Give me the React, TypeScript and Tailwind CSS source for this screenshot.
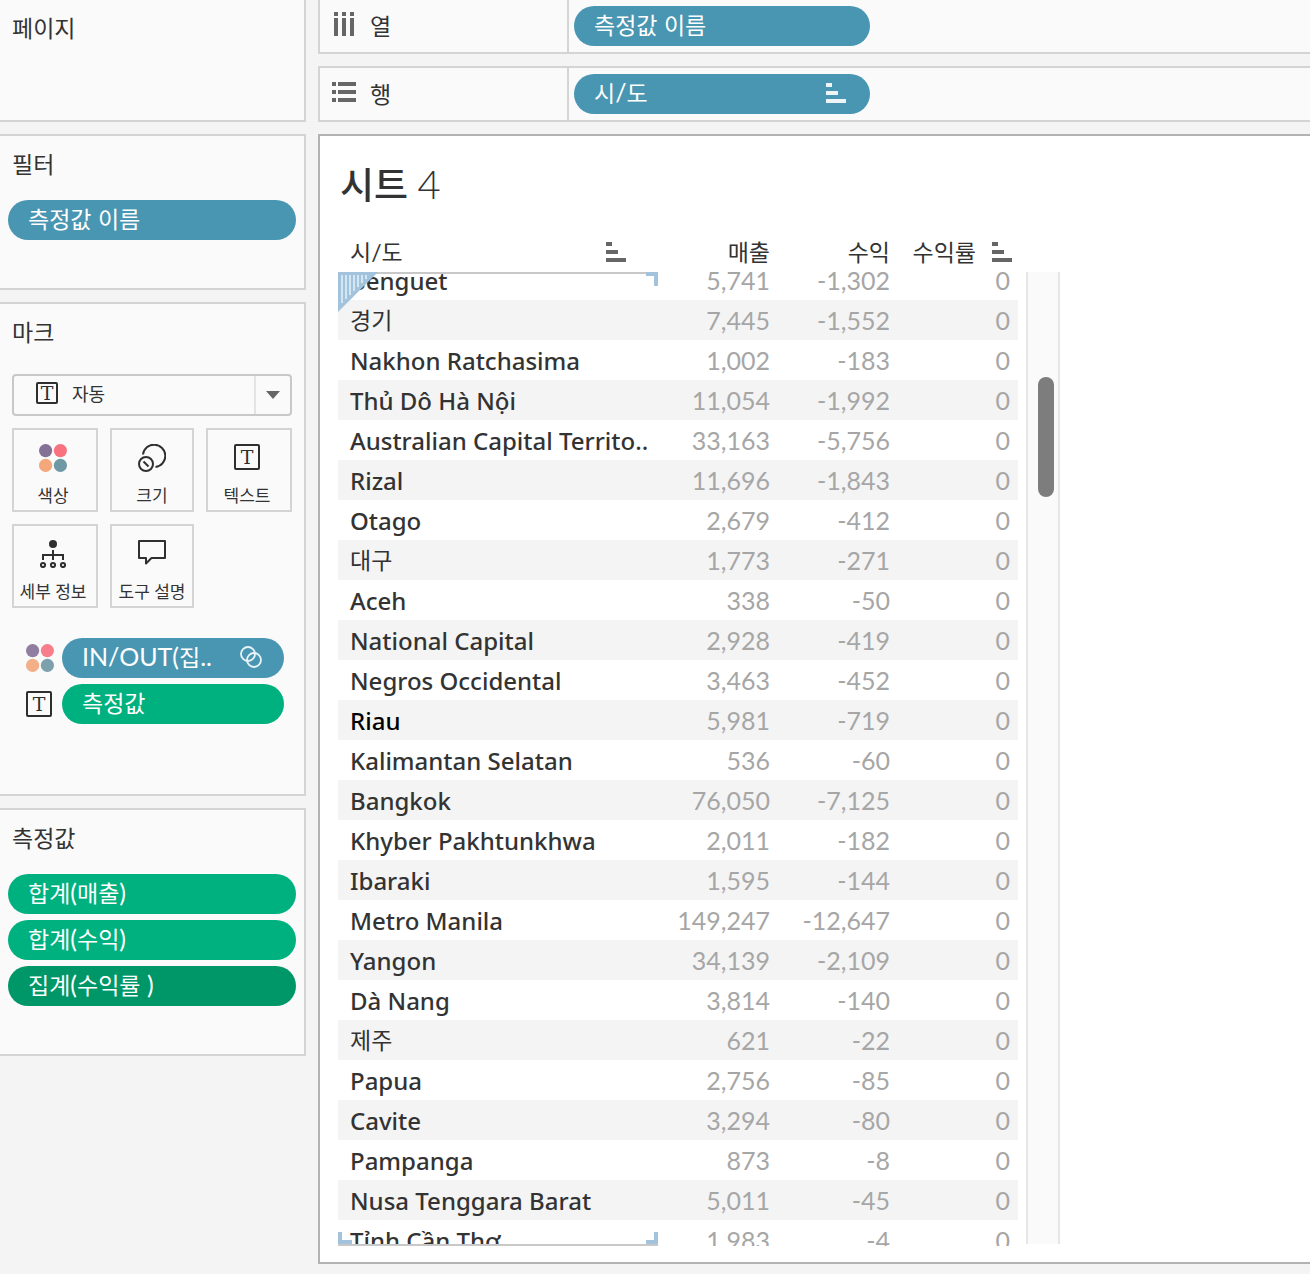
import type { ReactNode } from "react";

const rows: [string, string, string][] = [
  ["Benguet", "5,741", "-1,302"],
  ["경기", "7,445", "-1,552"],
  ["Nakhon Ratchasima", "1,002", "-183"],
  ["Thủ Dô Hà Nội", "11,054", "-1,992"],
  ["Australian Capital Territo..", "33,163", "-5,756"],
  ["Rizal", "11,696", "-1,843"],
  ["Otago", "2,679", "-412"],
  ["대구", "1,773", "-271"],
  ["Aceh", "338", "-50"],
  ["National Capital", "2,928", "-419"],
  ["Negros Occidental", "3,463", "-452"],
  ["Riau", "5,981", "-719"],
  ["Kalimantan Selatan", "536", "-60"],
  ["Bangkok", "76,050", "-7,125"],
  ["Khyber Pakhtunkhwa", "2,011", "-182"],
  ["Ibaraki", "1,595", "-144"],
  ["Metro Manila", "149,247", "-12,647"],
  ["Yangon", "34,139", "-2,109"],
  ["Dà Nang", "3,814", "-140"],
  ["제주", "621", "-22"],
  ["Papua", "2,756", "-85"],
  ["Cavite", "3,294", "-80"],
  ["Pampanga", "873", "-8"],
  ["Nusa Tenggara Barat", "5,011", "-45"],
  ["Tỉnh Cần Thơ", "1,983", "-4"],
];

function SortIcon({ className }: { className: string }) {
  return (
    <svg width="20" height="20" viewBox="0 0 20 20" fill="currentColor" className={className} aria-hidden="true">
      <path d="M0 0h6v4H0zM0 8h12v4H0zM0 16h20v4H0z" />
    </svg>
  );
}

function ColorIcon({ className = "" }: { className?: string }) {
  return (
    <svg width="28" height="28" viewBox="0 0 28 28" className={className} aria-hidden="true">
      <circle cx="6.6" cy="6.6" r="6.6" fill="#857096" />
      <circle cx="21.4" cy="6.6" r="6.6" fill="#f9717f" />
      <circle cx="6.6" cy="21.4" r="6.6" fill="#f3a77b" />
      <circle cx="21.4" cy="21.4" r="6.6" fill="#6f98a5" />
    </svg>
  );
}

function TextIcon({ small = false }: { small?: boolean }) {
  const size = small ? 22 : 26;
  return (
    <svg width={size} height={size} viewBox={`0 0 ${size} ${size}`} className="shrink-0 text-[#2f2f2f]" aria-hidden="true">
      <rect x="1" y="1" width={size - 2} height={size - 2} rx="1" fill="none" stroke="currentColor" strokeWidth="2" />
      <text x={size / 2} y={small ? 18 : 20} textAnchor="middle" fontFamily="'DejaVu Serif', serif" fontSize="19" fill="currentColor">
        T
      </text>
    </svg>
  );
}

function SizeIcon() {
  return (
    <svg width="28" height="28" viewBox="0 0 28 28" fill="none" stroke="#2f2f2f" strokeWidth="2" aria-hidden="true">
      <path d="M5 10.5A11.2 11.2 0 1 1 17.5 23" />
      <circle cx="8" cy="20" r="7" />
      <path d="M5.5 17.5l5 5" />
    </svg>
  );
}

function DetailIcon() {
  return (
    <svg width="26" height="28" viewBox="0 0 26 28" fill="none" stroke="#2f2f2f" strokeWidth="2" aria-hidden="true">
      <circle cx="13" cy="4" r="4" fill="#2f2f2f" stroke="none" />
      <path d="M13 10v10M3 20v-5h20v5" />
      <circle cx="3" cy="25" r="2.1" />
      <circle cx="13" cy="25" r="2.1" />
      <circle cx="23" cy="25" r="2.1" />
    </svg>
  );
}

function TooltipIcon() {
  return (
    <svg width="28" height="26" viewBox="0 0 28 26" fill="none" stroke="#2f2f2f" strokeWidth="2" strokeLinejoin="round" aria-hidden="true">
      <path d="M1 1h26v17H13.5L8 23.5V18H1z" />
    </svg>
  );
}

function SetIcon() {
  return (
    <svg width="22" height="22" viewBox="0 0 22 22" fill="none" stroke="#e9f3f7" strokeWidth="1.8" className="mr-0.5" aria-hidden="true">
      <circle cx="8" cy="8" r="7" />
      <circle cx="14" cy="14" r="7" />
    </svg>
  );
}

const pillTones = {
  blue: "bg-[#4996b2]",
  green: "bg-[#00b180]",
  darkGreen: "bg-[#009768]",
};

/* Hangul runs are set smaller than the Latin letters and signs around them. */
function MixedText({ text }: { text: string }) {
  return (
    <span className="pb-0.5 text-[25px] leading-8">
      {text.split(/([가-힣]+)/).map((run, i) =>
        i % 2 ? <span key={i} className="text-[23px]">{run}</span> : run
      )}
    </span>
  );
}

function Pill({ tone, className = "", icon, label }: { tone: keyof typeof pillTones; className?: string; icon?: ReactNode; label: string }) {
  return (
    <button
      type="button"
      className={`flex h-10 items-center justify-between rounded-full px-5 pb-0.5 text-left whitespace-nowrap text-white ${pillTones[tone]} ${className}`}
    >
      <MixedText text={label} />
      {icon}
    </button>
  );
}

function Panel({ title, className, children }: { title: string; className: string; children?: ReactNode }) {
  return (
    <section className={`border-r-2 border-b-2 border-[#d4d4d4] bg-[#fafafa] ${className}`}>
      <h2 className="px-3 leading-8">{title}</h2>
      {children}
    </section>
  );
}

function MarkButton({ label, className = "", children }: { label: string; className?: string; children: ReactNode }) {
  return (
    <button type="button" className={`flex h-21 flex-col items-center justify-between border-2 border-[#d4d4d4] pt-3.5 pb-0.5 text-[17px] leading-6 whitespace-nowrap ${className}`}>
      {children}
      <span>{label}</span>
    </button>
  );
}

function Shelf({ label, icon, className, children }: { label: string; icon: ReactNode; className: string; children: ReactNode }) {
  return (
    <section className={`flex border-b-2 border-l-2 border-[#d4d4d4] bg-[#fafafa] ${className}`}>
      <h2 className="flex w-[249px] shrink-0 items-center gap-3 border-r-2 border-[#d4d4d4] pl-3 leading-8">
        <span className="pb-1">{icon}</span>
        {label}
      </h2>
      <div className="px-[5px] py-1.5">{children}</div>
    </section>
  );
}

function SheetTable() {
  const last = rows.length - 1;
  const rowHeight = (i: number) => (i === 0 ? "h-7 items-end" : i === last ? "h-[26px] items-start" : "h-10 items-center");
  return (
    <div className="relative w-[680px] shrink-0">
      <table className="w-full table-fixed border-collapse">
        <thead>
          <tr className="h-10">
            <th scope="col" className="w-80 pr-8 pl-3 text-left font-normal">
              <div className="flex items-center justify-between">
                시/도
                <SortIcon className="text-[#666]" />
              </div>
            </th>
            <th scope="col" className="pr-2 text-right font-normal">매출</th>
            <th scope="col" className="pr-2 text-right font-normal">수익</th>
            <th scope="col" className="pr-1.5 font-normal">
              <div className="flex items-center justify-end gap-4 whitespace-nowrap">
                수익률
                <SortIcon className="text-[#666]" />
              </div>
            </th>
          </tr>
        </thead>
        <tbody>
          {rows.map(([name, sales, profit], i) => (
            <tr key={name} className={i % 2 ? "bg-[#f4f4f4]" : "bg-white"}>
              <th scope="row" className="p-0 text-left font-medium">
                <div className={`flex overflow-hidden pl-3 font-['Noto_Sans','Noto_Sans_CJK_KR',sans-serif] ${rowHeight(i)} ${name === "Riau" ? "text-black" : ""}`}>
                  <span className={`h-10 whitespace-nowrap ${/[가-힣]/.test(name) ? "text-[23px] leading-10 font-normal" : "text-2xl leading-[42px]"}`}>{name}</span>
                </div>
              </th>
              {[sales, profit, "0"].map((value, c) => (
                <td key={c} className="p-0 text-[25px] text-[#a6a6a6]">
                  <div className={`flex justify-end overflow-hidden pr-2 ${rowHeight(i)}`}>
                    <span className="h-10 leading-10">{value}</span>
                  </div>
                </td>
              ))}
            </tr>
          ))}
        </tbody>
      </table>
      <div className="pointer-events-none absolute top-10 bottom-0 left-0 w-80 border-y-2 border-[#c8c8c8]">
        <svg width="40" height="40" viewBox="0 0 40 40" className="absolute -top-0.5 left-0" aria-hidden="true">
          <path d="M0 0h40L0 40z" fill="#a3c2dc" />
          <path d="M4 3v28M8 3v24M12 3v20M16 3v16M20 3v12M24 3v8M28 3v4" stroke="#d2e6f3" strokeWidth="2" />
        </svg>
        <span className="absolute -top-0.5 right-0 h-3.5 w-3 border-t-4 border-r-4 border-[#a3c2dc]" />
        <span className="absolute bottom-0 left-0 h-3 w-3.5 border-b-4 border-l-4 border-[#a3c2dc]" />
        <span className="absolute right-0 bottom-0 h-3 w-3 border-r-4 border-b-4 border-[#a3c2dc]" />
      </div>
    </div>
  );
}

export default function App() {
  return (
    <div className="flex min-h-screen gap-3 overflow-x-hidden bg-[#f4f4f4] font-['Lato','Noto_Sans_CJK_KR',sans-serif] text-[23px] text-[#333]">
      <aside className="flex w-[306px] shrink-0 flex-col gap-3">
        <Panel title="페이지" className="h-[122px] pt-3" />
        <Panel title="필터" className="h-39 border-t-2 pt-3">
          <div className="px-2 pt-5">
            <Pill tone="blue" className="w-full" label="측정값 이름" />
          </div>
        </Panel>
        <Panel title="마크" className="h-[494px] border-t-2 pt-3">
          <div className="px-3 pt-[26px]">
            <div className="flex h-[42px] items-stretch rounded-sm border-2 border-[#c8c8c8] pl-[22px] text-lg">
              <label htmlFor="mark-type" aria-label="마크 유형" className="flex shrink-0 items-center pr-3.5 pb-1">
                <TextIcon small />
              </label>
              <select id="mark-type" className="min-w-0 flex-1 appearance-none pb-0.5">
                <option>자동</option>
              </select>
              <span className="flex w-9 items-center justify-center border-l-2 border-[#e4e4e4]">
                <svg width="14" height="8" viewBox="0 0 14 8" aria-hidden="true">
                  <path d="M0 0h14L7 8z" fill="#666" />
                </svg>
              </span>
            </div>
            <div className="grid grid-cols-[86px_84px_86px] gap-3 pt-3">
              <MarkButton label="색상" className="pr-1"><ColorIcon /></MarkButton>
              <MarkButton label="크기"><SizeIcon /></MarkButton>
              <MarkButton label="텍스트" className="pr-1"><TextIcon /></MarkButton>
              <MarkButton label="세부 정보" className="pr-1"><DetailIcon /></MarkButton>
              <MarkButton label="도구 설명"><TooltipIcon /></MarkButton>
            </div>
          </div>
          <ul className="flex flex-col gap-1.5 pt-[30px] pr-5 pl-[26px]">
            <li className="flex items-center gap-2">
              <ColorIcon className="shrink-0 opacity-90" />
              <Pill tone="blue" className="flex-1" icon={<SetIcon />} label="IN/OUT(집.." />
            </li>
            <li className="flex items-center gap-2.5">
              <TextIcon />
              <Pill tone="green" className="flex-1" label="측정값" />
            </li>
          </ul>
        </Panel>
        <Panel title="측정값" className="h-62 border-t-2 pt-3">
          <div className="flex flex-col gap-1.5 px-2 pt-5">
            <Pill tone="green" label="합계(매출)" />
            <Pill tone="green" label="합계(수익)" />
            <Pill tone="darkGreen" label="집계(수익률 )" />
          </div>
        </Panel>
      </aside>

      <main className="flex min-w-0 flex-1 flex-col gap-3 pb-2.5">
        <Shelf
          label="열"
          className="h-[54px]"
          icon={
            <svg width="26" height="24" viewBox="0 0 26 24" fill="#666" aria-hidden="true">
              <path d="M2 0h4v4H2zM10 0h4v4h-4zM18 0h4v4h-4zM2 6h4v18H2zM10 6h4v18h-4zM18 6h4v18h-4z" />
            </svg>
          }
        >
          <Pill tone="blue" className="w-74" label="측정값 이름" />
        </Shelf>
        <Shelf
          label="행"
          className="h-14 border-t-2"
          icon={
            <svg width="26" height="20" viewBox="0 0 26 20" fill="#666" aria-hidden="true">
              <path d="M0 0h4v4H0zM6 0h18v4H6zM0 8h4v4H0zM6 8h18v4H6zM0 16h4v4H0zM6 16h18v4H6z" />
            </svg>
          }
        >
          <Pill tone="blue" className="w-74" icon={<SortIcon className="mr-1 text-[#edf5f8]" />} label="시/도" />
        </Shelf>
        <section className="flex-1 border-y-2 border-l-2 border-[#b3b3b3] bg-white pb-4 pl-[18px]">
          <h1 className="pt-[25px] pb-[23px] pl-0.5 text-[37px] leading-12 font-medium">
            시트 <span className="text-[40px] leading-none font-light">4</span>
          </h1>
          <div className="flex gap-2">
            <SheetTable />
            <div className="mt-10 mb-0.5 w-[34px] border-x-2 border-[#e6e6e6] bg-[#fafafa] pt-[105px] pl-2.5">
              <div className="h-30 w-4 rounded-full bg-[#7d7d7d]" />
            </div>
          </div>
        </section>
      </main>
    </div>
  );
}
